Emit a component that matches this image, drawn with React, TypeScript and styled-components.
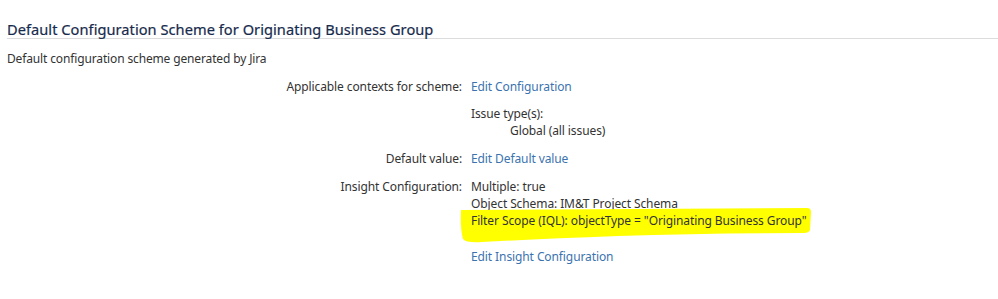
import styled, { createGlobalStyle } from "styled-components";

const GlobalStyle = createGlobalStyle`
  html, body {
    margin: 0;
    background: #ffffff;
  }
  body {
    font-family: "Noto Sans", "Open Sans", Arial, sans-serif;
    color: #333333;
  }
`;

const Page = styled.div`
  width: 998px;
  height: 299px;
  padding: 0 0 0 7px;
  box-sizing: border-box;
  overflow: hidden;
`;

const Title = styled.h2`
  margin: 0;
  padding: 20px 0 0;
  font-size: 14.6px;
  font-weight: 400;
  line-height: 18px;
  letter-spacing: 0.05px;
  color: #172b4d;
  -webkit-text-stroke: 0.2px #172b4d;
  border-bottom: 1px solid #dcdcdc;
`;

const Description = styled.p`
  margin: 11px 0 0;
  font-size: 12px;
  line-height: 17px;
  letter-spacing: -0.14px;
  color: #333333;
`;

const ConfigGrid = styled.div`
  display: grid;
  grid-template-columns: 455px 1fr;
  column-gap: 9px;
  margin-top: 11px;
  font-size: 12px;
  line-height: 17px;
  letter-spacing: -0.1px;
`;

const Label = styled.div<{ $gap?: number }>`
  text-align: right;
  color: #333333;
  margin-top: ${({ $gap }) => $gap ?? 0}px;
`;

const Value = styled.div<{ $gap?: number }>`
  margin-top: ${({ $gap }) => $gap ?? 0}px;
  color: #333333;
`;

const Link = styled.a`
  color: #3b73af;
  text-decoration: none;
  cursor: pointer;
`;

const Line = styled.div<{ $indent?: number; $gap?: number }>`
  padding-left: ${({ $indent }) => $indent ?? 0}px;
  margin-top: ${({ $gap }) => $gap ?? 0}px;
`;

const Highlighted = styled.div`
  position: relative;
`;

/* hand-drawn marker stroke behind the IQL line */
const Marker = styled.svg`
  position: absolute;
  left: -13px;
  top: -6px;
  width: 354px;
  height: 38px;
  z-index: 0;
  pointer-events: none;
`;

const HighlightText = styled.span`
  position: relative;
  z-index: 1;
`;

export default function App() {
  return (
    <>
      <GlobalStyle />
      <Page>
        <Title>Default Configuration Scheme for Originating Business Group</Title>
        <Description>Default configuration scheme generated by Jira</Description>
        <ConfigGrid>
          <Label>Applicable contexts for scheme:</Label>
          <Value>
            <Link>Edit Configuration</Link>
          </Value>

          <Label />
          <Value $gap={10}>
            <Line>Issue type(s):</Line>
            <Line $indent={39}>Global (all issues)</Line>
          </Value>

          <Label $gap={11}>Default value:</Label>
          <Value $gap={11}>
            <Link>Edit Default value</Link>
          </Value>

          <Label $gap={11}>Insight Configuration:</Label>
          <Value $gap={11}>
            <Line>Multiple: true</Line>
            <Line>Object Schema: IM&amp;T Project Schema</Line>
            <Highlighted>
              <Marker viewBox="0 0 354 38" preserveAspectRatio="none">
                <path
                  d="M3 4 L349 2 Q353 2 353 6 L352 24 Q351 27 346 27 Q250 27 160 30 Q80 33 24 36 Q8 37 5 33 Q2 22 3 4 Z"
                  fill="#ffff00"
                />
              </Marker>
              <HighlightText>
                Filter Scope (IQL): objectType = "Originating Business Group"
              </HighlightText>
            </Highlighted>
            <Line $gap={19}>
              <Link>Edit Insight Configuration</Link>
            </Line>
          </Value>
        </ConfigGrid>
      </Page>
    </>
  );
}
